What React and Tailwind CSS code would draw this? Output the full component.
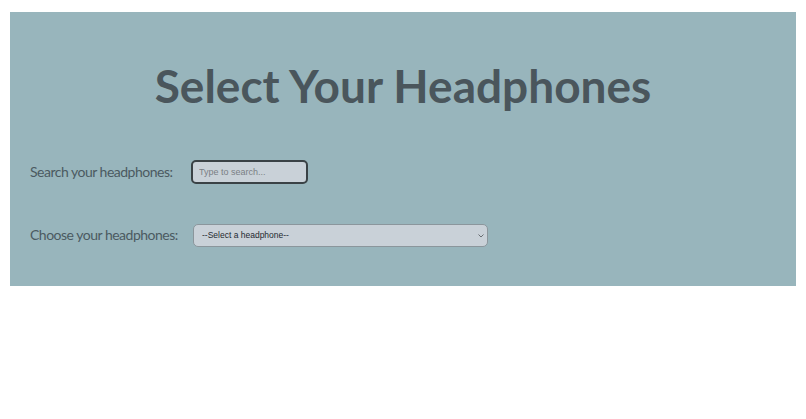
export default function App() {
  return (
    <div className="bg-white w-[806px] h-[419px] pt-[12px] px-[10px]">
      <div className="bg-[#98b5bc] h-[274px] pt-[51px] px-[20px]" style={{ fontFamily: 'Lato, sans-serif' }}>
        <h1 className="text-center text-[46px] leading-[46px] font-bold text-[#4a565c] whitespace-nowrap">Select Your Headphones</h1>
        <div className="mt-[51px] flex items-center h-[24px]">
          <label className="text-[14px] tracking-[-0.5px] text-[#4b5a61] w-[161px] whitespace-nowrap -mt-[2px]">Search your headphones:</label>
          <input
            type="text"
            placeholder="Type to search..."
            className="w-[117px] h-[24px] rounded-[5px] border-2 border-[#3a4246] bg-[#c9d1d8] px-[6px] text-[9px] placeholder:text-[#7a7f85] outline-none"
            style={{ fontFamily: '"Liberation Sans", Arial, sans-serif' }}
          />
        </div>
        <div className="mt-[40px] flex items-center h-[23px]">
          <label className="text-[14px] tracking-[-0.5px] text-[#4b5a61] w-[163px] whitespace-nowrap -mt-[2px]">Choose your headphones:</label>
          <div className="relative flex items-center w-[295px] h-[23px]">
            <select
              className="appearance-none block w-full h-[23px] rounded-[5px] border border-[#8b969c] bg-[#c9d1d8] pl-[8px] text-[8.5px] text-[#1f2a30]"
              style={{ fontFamily: '"Liberation Sans", Arial, sans-serif' }}
            >
              <option>--Select a headphone--</option>
            </select>
            <svg className="absolute right-[4px] w-[6px] h-[4px] pointer-events-none" viewBox="0 0 6 4" fill="none">
              <path d="M0.5 0.5 L3 3 L5.5 0.5" stroke="#5b6166" strokeWidth="0.9" />
            </svg>
          </div>
        </div>
      </div>
    </div>
  );
}
